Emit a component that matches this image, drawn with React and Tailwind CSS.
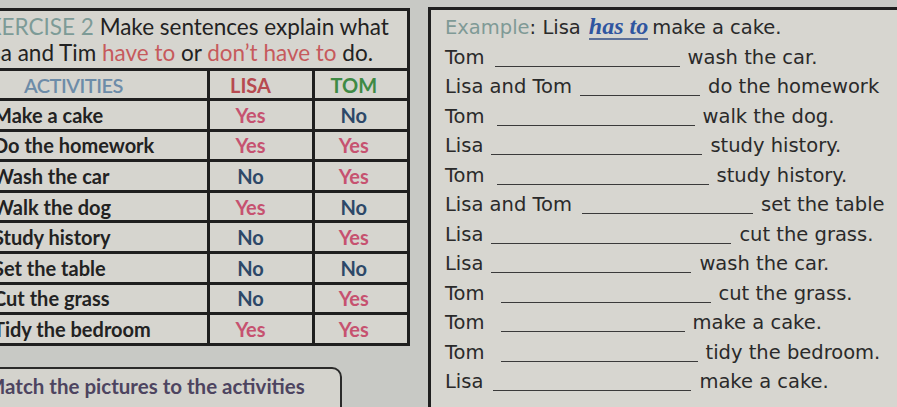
const activities = [
  { name: "Make a cake", lisa: "Yes", tom: "No" },
  { name: "Do the homework", lisa: "Yes", tom: "Yes" },
  { name: "Wash the car", lisa: "No", tom: "Yes" },
  { name: "Walk the dog", lisa: "Yes", tom: "No" },
  { name: "Study history", lisa: "No", tom: "Yes" },
  { name: "Set the table", lisa: "No", tom: "No" },
  { name: "Cut the grass", lisa: "No", tom: "Yes" },
  { name: "Tidy the bedroom", lisa: "Yes", tom: "Yes" },
];

const sentences = [
  { who: "Tom", blank: "w-[185px]", gap: "ml-[10px]", rest: "wash the car." },
  { who: "Lisa and Tom", blank: "w-[120px]", gap: "ml-[8px]", rest: "do the homework" },
  { who: "Tom", blank: "w-[198px]", gap: "ml-[12px]", rest: "walk the dog." },
  { who: "Lisa", blank: "w-[211px]", gap: "ml-[8px]", rest: "study history." },
  { who: "Tom", blank: "w-[212px]", gap: "ml-[12px]", rest: "study history." },
  { who: "Lisa and Tom", blank: "w-[171px]", gap: "ml-[10px]", rest: "set the table" },
  { who: "Lisa", blank: "w-[240px]", gap: "ml-[8px]", rest: "cut the grass." },
  { who: "Lisa", blank: "w-[200px]", gap: "ml-[8px]", rest: "wash the car." },
  { who: "Tom", blank: "w-[210px]", gap: "ml-[16px]", rest: "cut the grass." },
  { who: "Tom", blank: "w-[184px]", gap: "ml-[16px]", rest: "make a cake." },
  { who: "Tom", blank: "w-[197px]", gap: "ml-[16px]", rest: "tidy the bedroom." },
  { who: "Lisa", blank: "w-[198px]", gap: "ml-[10px]", rest: "make a cake." },
];

const Answer = ({ value }) => (
  <span className={value === "Yes" ? "text-[#c65270]" : "text-[#2d4868]"}>
    {value}
  </span>
);

export default function App() {
  return (
    <div className="flex h-[407px] w-[897px] overflow-hidden bg-[#c8c9c5] pt-[7px]">
      {/* left sheet: table */}
      <div className="-ml-[30px] flex w-[440px] shrink-0 flex-col font-['Lato',sans-serif]">
        <div className="mt-px border-t-[3px] border-r-[3px] border-[#1f1f1f] bg-[#d6d5cf]">
          <div className="pl-[4px] pt-[3px] pb-[2px] text-[22.5px] leading-[26px] text-[#222]">
            <p>
              <span className="text-[#7d9b97]">EXERCISE 2</span> Make sentences explain what
            </p>
            <p>
              Lisa and Tim <span className="text-[#c65a5c]">have to</span> or{" "}
              <span className="text-[#c65a5c]">don’t have to</span> do.
            </p>
          </div>

          <table className="w-full border-collapse text-[20px] leading-[22px]">
            <thead>
              <tr className="h-[30px] border-y-[3px] border-[#1f1f1f]">
                <th className="w-[238px] p-0 pl-[54px] text-left font-semibold tracking-tight text-[#6d8ca8]">
                  ACTIVITIES
                </th>
                <th className="w-[105px] border-x-[3px] border-[#1f1f1f] p-0 pr-[20px] font-bold text-[#b74a50]">
                  LISA
                </th>
                <th className="p-0 pr-[14px] font-bold text-[#3f8a45]">TOM</th>
              </tr>
            </thead>
            <tbody>
              {activities.map((a) => (
                <tr key={a.name} className="h-[30.6px] border-b-[3px] border-[#1f1f1f] font-bold">
                  <td className="p-0 pl-[23px] text-[#222]">{a.name}</td>
                  <td className="border-x-[3px] border-[#1f1f1f] p-0 pr-[20px] text-center">
                    <Answer value={a.lisa} />
                  </td>
                  <td className="p-0 pr-[14px] text-center">
                    <Answer value={a.tom} />
                  </td>
                </tr>
              ))}
            </tbody>
          </table>
        </div>

        <div className="mt-[21px] w-[372px] rounded-[10px] border-2 border-[#2a2a2a] bg-[#d4d3cd] pl-[14px] pt-[2px] pb-[12px]">
          <span className="text-[20.5px] font-bold text-[#4d4460]">
            Match the pictures to the activities
          </span>
        </div>
      </div>

      {/* right sheet: sentences */}
      <div className="ml-[18px] flex-1 border-t-[3px] border-l-[3px] border-[#1f1f1f] bg-[#d7d6d0] pl-[14px] pt-[3px] font-['DejaVu_Sans',sans-serif] text-[19.5px] text-[#2a2a2a]">
        <p className="flex h-[29.5px] items-baseline whitespace-nowrap">
          <span className="text-[#7f9a96]">Example</span>: Lisa
          <span className="ml-[8px] border-b-2 border-[#5b6f98] font-['Liberation_Serif',serif] text-[24px] font-bold italic leading-none text-[#2f55a0]">
            has to
          </span>
          <span className="ml-[4px]">make a cake.</span>
        </p>
        {sentences.map((s, i) => (
          <p key={i} className="flex h-[29.5px] items-baseline whitespace-nowrap">
            <span>{s.who}</span>
            <span className={`${s.blank} ${s.gap} inline-block translate-y-[3px] border-b-[1.5px] border-[#3a3a3a]`} />
            <span className="ml-[8px]">{s.rest}</span>
          </p>
        ))}
      </div>
    </div>
  );
}
